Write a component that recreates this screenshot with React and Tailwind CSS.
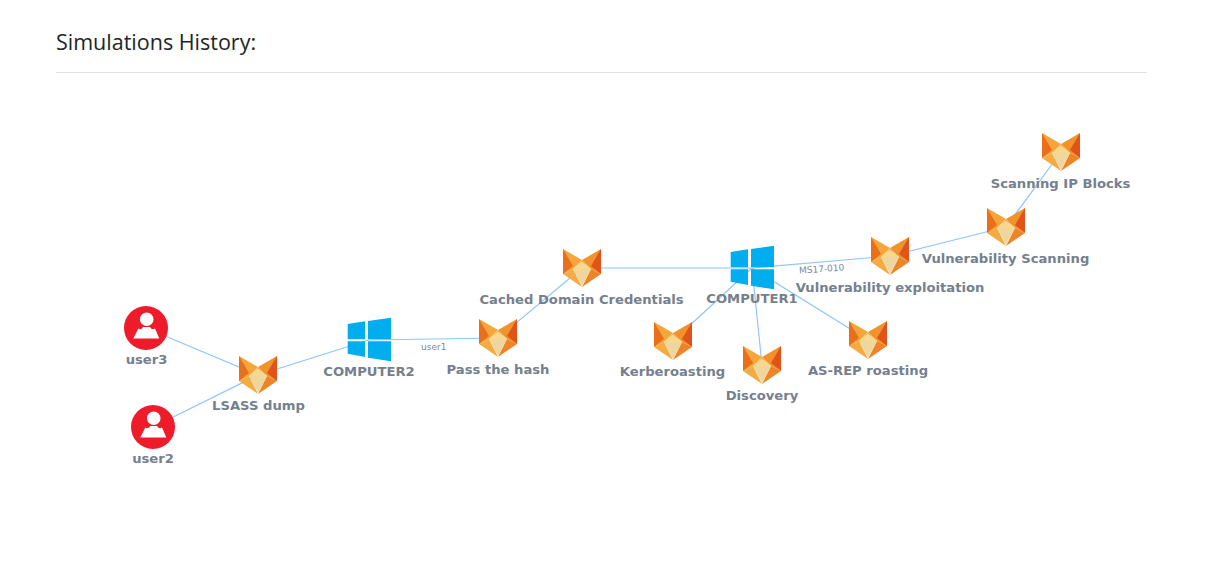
import React from "react";

// Diagram positions are in page pixels; the canvas starts at (56, 73).
const ORIGIN_X = 56;
const ORIGIN_Y = 73;

const nodes = {
  ipBlocks: { type: "fox", x: 1061, y: 152, label: "Scanning IP Blocks", lx: 1060.5, ly: 184 },
  vulnScan: { type: "fox", x: 1006, y: 227, label: "Vulnerability Scanning", lx: 1005.5, ly: 259 },
  vulnExp: { type: "fox", x: 890, y: 256, label: "Vulnerability exploitation", lx: 890, ly: 288 },
  cached: { type: "fox", x: 582, y: 268, label: "Cached Domain Credentials", lx: 581.5, ly: 300 },
  pass: { type: "fox", x: 498, y: 338, label: "Pass the hash", lx: 498, ly: 370 },
  kerb: { type: "fox", x: 673, y: 341, label: "Kerberoasting", lx: 672.5, ly: 372 },
  discovery: { type: "fox", x: 762, y: 365, label: "Discovery", lx: 762, ly: 396 },
  asrep: { type: "fox", x: 868, y: 340, label: "AS-REP roasting", lx: 868, ly: 371 },
  lsass: { type: "fox", x: 258, y: 375, label: "LSASS dump", lx: 258.5, ly: 406 },
  comp1: { type: "win", x: 752, y: 268, label: "COMPUTER1", lx: 752, ly: 299 },
  comp2: { type: "win", x: 369, y: 340, label: "COMPUTER2", lx: 369, ly: 372 },
  user3: { type: "user", x: 146, y: 328, label: "user3", lx: 146.5, ly: 360 },
  user2: { type: "user", x: 153, y: 427, label: "user2", lx: 153, ly: 459 },
};

const edges = [
  ["user3", "lsass"],
  ["user2", "lsass"],
  ["lsass", "comp2"],
  ["comp2", "pass"],
  ["pass", "cached"],
  ["cached", "comp1"],
  ["comp1", "vulnExp"],
  ["vulnExp", "vulnScan"],
  ["vulnScan", "ipBlocks"],
  ["comp1", "kerb"],
  ["comp1", "discovery"],
  ["comp1", "asrep"],
];

function Fox() {
  return (
    <svg viewBox="0 0 38 38" className="h-[38px] w-[38px] blur-[0.3px]" aria-hidden="true">
      <polygon points="0,0 19,11 10,20 0,25" fill="#f6a53a" />
      <polygon points="0,0 10,17 0,25" fill="#e96f1b" />
      <polygon points="38,0 19,11 28,20 38,25" fill="#f1922b" />
      <polygon points="38,0 28,17 38,25" fill="#e2531a" />
      <polygon points="0,25 10,20 19,38" fill="#f4ab42" />
      <polygon points="38,25 28,20 19,38" fill="#ee8428" />
      <polygon points="19,11 10,20 19,13" fill="#f8b857" />
      <polygon points="19,11 28,20 19,13" fill="#f4a23a" />
      <polygon points="19,13 10,20 19,37 28,20" fill="#efd69c" />
      <polygon points="19,13 10,20 28,20" fill="#f6d98e" />
    </svg>
  );
}

function Windows() {
  return (
    <svg viewBox="0 0 46 46" className="h-[46px] w-[46px]" aria-hidden="true">
      <polygon points="1.7,7 19,4.3 19,22.3 1.7,22.3" fill="#00adef" />
      <polygon points="22,4 45,0.7 45,22.3 22,22.3" fill="#00adef" />
      <polygon points="1.7,24.3 19,24.3 19,40 1.7,36.7" fill="#00adef" />
      <polygon points="22,24.3 45,24.3 45,44.3 22,40.7" fill="#00adef" />
    </svg>
  );
}

function UserIcon() {
  return (
    <svg viewBox="0 0 44 44" className="h-[44px] w-[44px]" aria-hidden="true">
      <circle cx="22" cy="22" r="22" fill="#ee1c2b" />
      <circle cx="22.7" cy="13.3" r="6.8" fill="#ffffff" />
      <path d="M9.3 32.5 L14.3 22.5 Q17 24.5 19 21 L26 21 Q28 24.5 31 22.5 L35.3 32.5 Z" fill="#ffffff" />
    </svg>
  );
}

const icons = { fox: Fox, win: Windows, user: UserIcon };

function Node({ node }) {
  const Icon = icons[node.type];
  return (
    <>
      <div
        className="absolute flex -translate-x-1/2 -translate-y-1/2"
        style={{ left: node.x - ORIGIN_X, top: node.y - ORIGIN_Y }}
      >
        <Icon />
      </div>
      <div
        className="absolute -translate-x-1/2 -translate-y-1/2 whitespace-nowrap font-['DejaVu_Sans',sans-serif] text-[13.15px] leading-none font-bold text-[#75808e]"
        style={{ left: node.lx - ORIGIN_X, top: node.ly - ORIGIN_Y }}
      >
        {node.label}
      </div>
    </>
  );
}

export default function App() {
  return (
    <div className="h-screen overflow-hidden bg-white pr-[76px] pl-14">
      <h2 className="border-b border-[#dee2e6] pt-[27px] pb-[16px] font-['Open_Sans',sans-serif] text-[21.5px] leading-[29px] font-medium text-[#212529]">
        Simulations History:
      </h2>

      {/* Network diagram */}
      <div className="relative h-[491px]">
        <svg className="absolute inset-0 h-full w-full overflow-visible" aria-hidden="true">
          {edges.map(([a, b]) => (
            <line
              key={a + b}
              x1={nodes[a].x - ORIGIN_X}
              y1={nodes[a].y - ORIGIN_Y}
              x2={nodes[b].x - ORIGIN_X}
              y2={nodes[b].y - ORIGIN_Y}
              stroke="#8fc6fb"
              strokeWidth="1.2"
            />
          ))}
        </svg>

        {Object.entries(nodes).map(([id, node]) => (
          <Node key={id} node={node} />
        ))}

        <div className="absolute top-[270px] left-[365px] font-['DejaVu_Sans',sans-serif] text-[9px] leading-none text-[#7d8794]">
          user1
        </div>
        <div className="absolute top-[192px] left-[743px] -rotate-[4deg] font-['DejaVu_Sans',sans-serif] text-[9px] leading-none text-[#7d8794]">
          MS17-010
        </div>
      </div>
    </div>
  );
}
